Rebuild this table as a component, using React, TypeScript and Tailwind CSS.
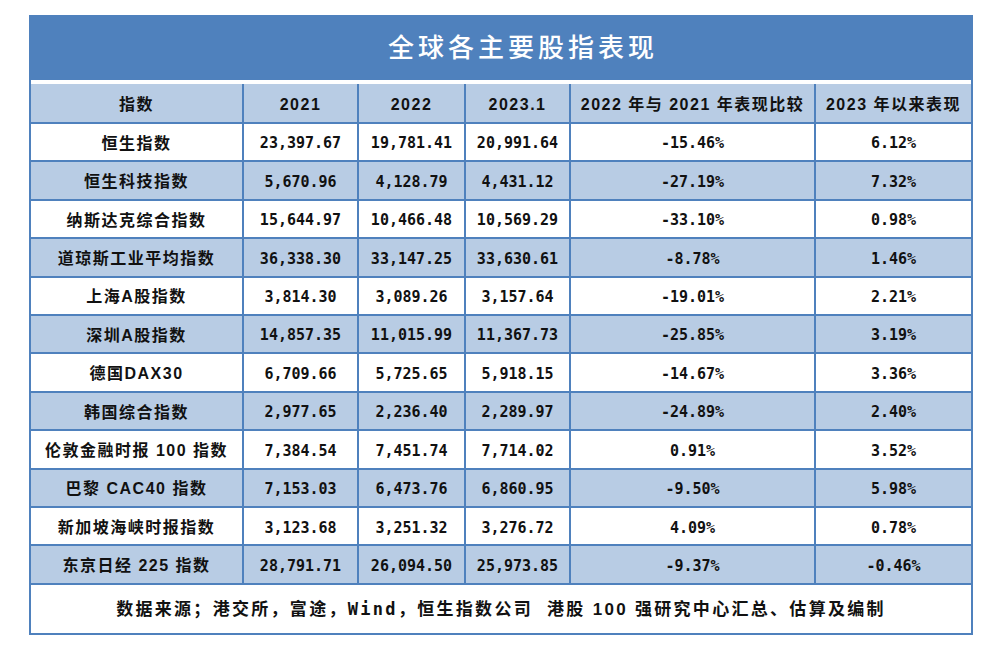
const rows: string[][] = [
  ['恒生指数', '23,397.67', '19,781.41', '20,991.64', '-15.46%', '6.12%'],
  ['恒生科技指数', '5,670.96', '4,128.79', '4,431.12', '-27.19%', '7.32%'],
  ['纳斯达克综合指数', '15,644.97', '10,466.48', '10,569.29', '-33.10%', '0.98%'],
  ['道琼斯工业平均指数', '36,338.30', '33,147.25', '33,630.61', '-8.78%', '1.46%'],
  ['上海A股指数', '3,814.30', '3,089.26', '3,157.64', '-19.01%', '2.21%'],
  ['深圳A股指数', '14,857.35', '11,015.99', '11,367.73', '-25.85%', '3.19%'],
  ['德国DAX30', '6,709.66', '5,725.65', '5,918.15', '-14.67%', '3.36%'],
  ['韩国综合指数', '2,977.65', '2,236.40', '2,289.97', '-24.89%', '2.40%'],
  ['伦敦金融时报 100 指数', '7,384.54', '7,451.74', '7,714.02', '0.91%', '3.52%'],
  ['巴黎 CAC40 指数', '7,153.03', '6,473.76', '6,860.95', '-9.50%', '5.98%'],
  ['新加坡海峡时报指数', '3,123.68', '3,251.32', '3,276.72', '4.09%', '0.78%'],
  ['东京日经 225 指数', '28,791.71', '26,094.50', '25,973.85', '-9.37%', '-0.46%'],
]

const headers = ['指数', '2021', '2022', '2023.1', '2022 年与 2021 年表现比较', '2023 年以来表现']

const gridCols = 'grid grid-cols-[213px_115px_107px_105px_245px_155px]'
const cjk = "font-['Liberation_Sans','Noto_Sans_CJK_SC',sans-serif]"
const mono = "font-['DejaVu_Sans_Mono','Noto_Sans_CJK_SC',monospace]"

export default function App() {
  return (
    <div className="min-h-[645px] w-[986px] bg-white pt-[15px] pl-[29px]">
      <div className="w-[944px] border-2 border-[#4f81bd] bg-white">
        <div
          className={`flex h-[63px] items-center justify-center bg-[#4f81bd] pl-[44px] text-[26px] font-medium tracking-[4px] text-white ${cjk}`}
        >
          全球各主要股指表现
        </div>
        <div className="h-[4px]" />

        <div className={`${gridCols} h-[40px] border-b-2 border-[#4f81bd] bg-[#b8cce4]`}>
          {headers.map((h, i) => (
            <div
              key={h}
              className={`flex items-center justify-center pt-[3px] text-[16px] font-bold tracking-[1.5px] text-[#111] ${cjk} ${
                i < 5 ? 'border-r-2 border-[#4f81bd]' : ''
              }`}
            >
              {h}
            </div>
          ))}
        </div>

        {rows.map((row, r) => (
          <div
            key={row[0]}
            className={`${gridCols} h-[38.42px] border-b-2 border-[#4f81bd] ${r % 2 === 1 ? 'bg-[#b8cce4]' : 'bg-white'}`}
          >
            {row.map((cell, i) => (
              <div
                key={i}
                className={`flex items-center justify-center pt-[3px] font-bold text-[#111] ${
                  i === 0 ? `text-[16px] tracking-[1.5px] ${cjk}` : `text-[15px] ${mono}`
                } ${i < 5 ? 'border-r-2 border-[#4f81bd]' : ''}`}
              >
                {cell}
              </div>
            ))}
          </div>
        ))}

        <div className={`flex h-[48px] items-center justify-center pt-[2px] text-[17px] font-bold tracking-[2.3px] text-[#111] ${cjk}`}>
          数据来源；港交所，富途，<span className={mono}>Wind</span>，恒生指数公司&nbsp; 港股 100 强研究中心汇总、估算及编制
        </div>
      </div>
    </div>
  )
}
